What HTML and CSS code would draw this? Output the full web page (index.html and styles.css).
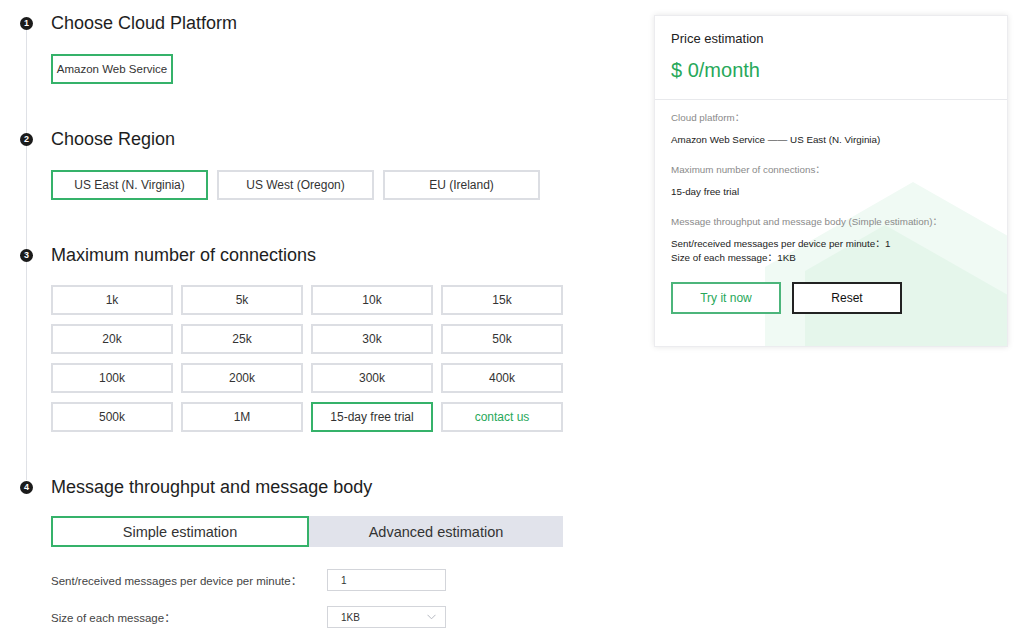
FILE: index.html
```html
<!DOCTYPE html>
<html>
<head>
<meta charset="utf-8">
<link rel="stylesheet" href="styles.css">
</head>
<body>
<div class="page">
  <div class="steps">
    <section class="step">
      <div class="step-head"><span class="num">1</span><h2>Choose Cloud Platform</h2></div>
      <div class="opts">
        <button class="opt sel aws">Amazon Web Service</button>
      </div>
    </section>
    <section class="step">
      <div class="step-head"><span class="num">2</span><h2>Choose Region</h2></div>
      <div class="opts regions">
        <button class="opt sel">US East (N. Virginia)</button>
        <button class="opt">US West (Oregon)</button>
        <button class="opt">EU (Ireland)</button>
      </div>
    </section>
    <section class="step">
      <div class="step-head"><span class="num">3</span><h2>Maximum number of connections</h2></div>
      <div class="grid">
        <button class="opt">1k</button>
        <button class="opt">5k</button>
        <button class="opt">10k</button>
        <button class="opt">15k</button>
        <button class="opt">20k</button>
        <button class="opt">25k</button>
        <button class="opt">30k</button>
        <button class="opt">50k</button>
        <button class="opt">100k</button>
        <button class="opt">200k</button>
        <button class="opt">300k</button>
        <button class="opt">400k</button>
        <button class="opt">500k</button>
        <button class="opt">1M</button>
        <button class="opt sel">15-day free trial</button>
        <button class="opt contact">contact us</button>
      </div>
    </section>
    <section class="step last">
      <div class="step-head"><span class="num">4</span><h2>Message throughput and message body</h2></div>
      <div class="tabs">
        <div class="tab active">Simple estimation</div>
        <div class="tab">Advanced estimation</div>
      </div>
      <div class="form">
        <label class="lbl">Sent/received messages per device per minute：</label>
        <div class="field">1</div>
        <label class="lbl">Size of each message：</label>
        <div class="field select">1KB
          <svg class="chev" width="9" height="6" viewBox="0 0 9 6"><path d="M0.5 0.8 L4.5 4.8 L8.5 0.8" fill="none" stroke="#b5b8c0" stroke-width="1"/></svg>
        </div>
      </div>
    </section>
  </div>

  <aside class="card">
    <svg class="deco" width="354" height="332" viewBox="0 0 354 332">
      <polygon points="111,332 111,252 259,167 354,221 354,332" fill="#f0faf4"/>
      <polygon points="151,332 151,256 231,210 354,280 354,332" fill="#e5f6eb"/>
    </svg>
    <div class="card-head">
      <div class="card-title">Price estimation</div>
      <div class="price">$ 0/month</div>
    </div>
    <div class="card-body">
      <div class="k">Cloud platform：</div>
      <div class="v">Amazon Web Service —— US East (N. Virginia)</div>
      <div class="k">Maximum number of connections：</div>
      <div class="v">15-day free trial</div>
      <div class="k">Message throughput and message body (Simple estimation)：</div>
      <div class="v tight">Sent/received messages per device per minute：1<br>Size of each message：1KB</div>
      <div class="actions">
        <button class="btn try">Try it now</button>
        <button class="btn reset">Reset</button>
      </div>
    </div>
  </aside>
</div>
</body>
</html>
```

FILE: styles.css
```css
* { box-sizing: border-box; }
body {
  margin: 0;
  background: #fff;
  font-family: "Liberation Sans", "Noto Sans CJK SC", Arial, sans-serif;
  color: #222;
}
.page {
  display: flex;
  align-items: flex-start;
  width: 1024px;
  height: 641px;
  overflow: hidden;
}
.steps {
  position: relative;
  width: 564px;
  padding-top: 11px;
}
.steps::before {
  content: "";
  position: absolute;
  left: 26px;
  top: 28px;
  height: 452px;
  width: 1px;
  background: #dfe1e6;
}
.step { margin-bottom: 43px; }
.step.last { margin-bottom: 0; }
.step-head {
  display: flex;
  align-items: center;
  height: 24px;
}
.num {
  position: relative;
  z-index: 1;
  flex: none;
  width: 13px;
  height: 13px;
  margin-left: 20px;
  margin-right: 18px;
  border-radius: 50%;
  background: #1b1b1b;
  color: #fff;
  font-size: 9px;
  font-weight: bold;
  line-height: 13px;
  text-align: center;
}
h2 {
  margin: 0;
  font-size: 18px;
  font-weight: normal;
  line-height: 24px;
  color: #1e1e1e;
}
.opts, .grid, .tabs, .form { margin-left: 51px; }
.opts { display: flex; gap: 9px; margin-top: 19px; }
.opt {
  display: block;
  height: 30px;
  border: 2px solid #dcdee3;
  background: #fff;
  font-family: inherit;
  font-size: 12px;
  color: #333;
  padding: 0;
}
.opt.sel { border-color: #35b26a; }
.aws { width: 122px; font-size: 11.5px; }
.regions .opt { width: 157px; }
.grid {
  display: grid;
  grid-template-columns: repeat(4, 122px);
  column-gap: 8px;
  row-gap: 9px;
  margin-top: 18px;
}
.opt.contact { color: #27a85a; }
.tabs {
  display: flex;
  margin-top: 17px;
  width: 512px;
  height: 31px;
}
.tab {
  flex: 1;
  display: flex;
  align-items: center;
  justify-content: center;
  font-size: 14.5px;
  color: #333;
  background: #e1e3eb;
}
.tab.active {
  background: #fff;
  border: 2px solid #35b26a;
}
.form {
  display: grid;
  grid-template-columns: 276px 119px;
  row-gap: 15px;
  align-items: center;
  margin-top: 22px;
}
.lbl { font-size: 11.5px; color: #444; }
.field {
  height: 22px;
  border: 1px solid #d3d5da;
  font-size: 10px;
  color: #333;
  padding-left: 13px;
  display: flex;
  align-items: center;
}
.select { justify-content: space-between; padding-right: 9px; }
.card {
  position: relative;
  overflow: hidden;
  margin-left: auto;
  margin-right: 16px;
  margin-top: 15px;
  width: 354px;
  height: 332px;
  background: #fff;
  border: 1px solid #ececef;
  box-shadow: 0 0 6px rgba(0, 0, 0, 0.1);
}
.deco { position: absolute; left: -1px; top: -1px; }
.card-head {
  position: relative;
  padding: 14px 16px 16px;
  border-bottom: 1px solid #e8e9ec;
}
.card-title { font-size: 13px; line-height: 18px; color: #222; }
.price {
  margin-top: 9px;
  font-size: 20px;
  line-height: 26px;
  color: #27a85a;
}
.card-body { position: relative; padding: 11px 16px 0; }
.k { font-size: 9.8px; line-height: 14px; color: #8a8a8a; }
.v { font-size: 9.8px; line-height: 14px; color: #222; margin-top: 8px; margin-bottom: 16px; }
.v.tight { margin-bottom: 17px; }
.actions { display: flex; gap: 11px; }
.btn {
  width: 110px;
  height: 32px;
  background: #fff;
  font-family: inherit;
  font-size: 12px;
  padding: 0;
}
.try { border: 2px solid #4cb57b; color: #27a85a; }
.reset { border: 2px solid #222; color: #111; }
```
